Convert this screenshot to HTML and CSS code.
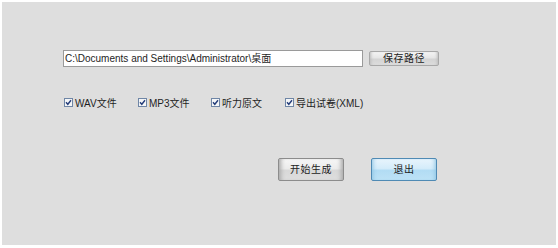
FILE: index.html
```html
<!DOCTYPE html>
<html lang="zh-CN">
<head>
<meta charset="utf-8">
<title>生成</title>
<link rel="stylesheet" href="styles.css">
</head>
<body>
<div class="panel">
  <div class="path-row">
    <div class="path-input">C:\Documents and Settings\Administrator\桌面</div>
    <button class="btn btn-save">保存路径</button>
  </div>
  <div class="check-row">
    <label class="check c1"><svg class="box" width="9" height="9" viewBox="0 0 9 9"><rect x="0.5" y="0.5" width="8" height="8" fill="#f4f6f8" stroke="#6f86a6"/><path d="M2 4.3 L3.8 6.3 L7 2.3" fill="none" stroke="#243d7a" stroke-width="1.4"/></svg><span>WAV文件</span></label>
    <label class="check c2"><svg class="box" width="9" height="9" viewBox="0 0 9 9"><rect x="0.5" y="0.5" width="8" height="8" fill="#f4f6f8" stroke="#6f86a6"/><path d="M2 4.3 L3.8 6.3 L7 2.3" fill="none" stroke="#243d7a" stroke-width="1.4"/></svg><span>MP3文件</span></label>
    <label class="check c3"><svg class="box" width="9" height="9" viewBox="0 0 9 9"><rect x="0.5" y="0.5" width="8" height="8" fill="#f4f6f8" stroke="#6f86a6"/><path d="M2 4.3 L3.8 6.3 L7 2.3" fill="none" stroke="#243d7a" stroke-width="1.4"/></svg><span>听力原文</span></label>
    <label class="check c4"><svg class="box" width="9" height="9" viewBox="0 0 9 9"><rect x="0.5" y="0.5" width="8" height="8" fill="#f4f6f8" stroke="#6f86a6"/><path d="M2 4.3 L3.8 6.3 L7 2.3" fill="none" stroke="#243d7a" stroke-width="1.4"/></svg><span>导出试卷(XML)</span></label>
  </div>
  <div class="action-row">
    <button class="btn btn-action">开始生成</button>
    <button class="btn btn-action btn-exit">退出</button>
  </div>
</div>
</body>
</html>
```
FILE: styles.css
```css
html, body {
  margin: 0;
  padding: 0;
  background: #ffffff;
}
body {
  width: 558px;
  height: 248px;
  overflow: hidden;
  font-family: "Liberation Sans", "Noto Sans CJK SC", sans-serif;
  font-size: 10px;
  color: #1e1e1e;
}
.panel {
  margin: 2px 2px 3px 2px;
  height: 243px;
  background: #dedede;
  display: flex;
  flex-direction: column;
  padding-top: 48px;
  box-sizing: border-box;
}
.path-row {
  display: flex;
  align-items: center;
  padding-left: 61px;
  height: 17px;
}
.path-input {
  width: 297px;
  height: 15px;
  border: 1px solid #9a9a9a;
  background: #ffffff;
  line-height: 15px;
  padding-left: 1px;
  box-sizing: content-box;
  white-space: nowrap;
  overflow: hidden;
  font-size: 10px;
}
.btn {
  font-family: "Liberation Sans", "Noto Sans CJK SC", sans-serif;
  font-size: 10px;
  color: #222;
  padding: 0;
  margin: 0;
  box-sizing: border-box;
}
.btn-save {
  margin-left: 6px;
  width: 70px;
  height: 15px;
  line-height: 13px;
  border: 1px solid #a8a8a8;
  border-radius: 2px;
  background: linear-gradient(to bottom, #f4f4f4 0%, #e6e6e6 45%, #d4d4d4 55%, #dcdcdc 100%);
  box-shadow: inset 3px 0 3px -2px #bcbcbc, inset -3px 0 3px -2px #bcbcbc;
  letter-spacing: 0.5px;
}
.check-row {
  display: flex;
  align-items: center;
  margin-top: 28px;
  height: 14px;
  padding-left: 62px;
}
.check {
  display: flex;
  align-items: center;
  gap: 2px;
  height: 14px;
  white-space: nowrap;
}
.check .box {
  flex: none;
}
.c1 { width: 74px; }
.c2 { width: 73px; }
.c3 { width: 74px; }
.c4 { width: 90px; }
.action-row {
  display: flex;
  margin-top: 49px;
  padding-left: 276px;
  gap: 27px;
}
.btn-action {
  width: 66px;
  height: 23px;
  line-height: 21px;
  border: 1px solid #8c8c8c;
  border-radius: 2px;
  letter-spacing: 0.5px;
  background: linear-gradient(to bottom, #f6f6f6 0%, #ececec 45%, #d8d8d8 55%, #dedede 100%);
  box-shadow: inset 5px 0 4px -3px #a8a8a8, inset -5px 0 4px -3px #a8a8a8;
}
.btn-exit {
  border-color: #4f8ab4;
  background: linear-gradient(to bottom, #e8f4fc 0%, #d4ecfa 45%, #b2dcf4 55%, #bde2f6 100%);
  box-shadow: inset 4px 0 4px -3px #8ec4e2, inset -4px 0 4px -3px #8ec4e2;
}
```
